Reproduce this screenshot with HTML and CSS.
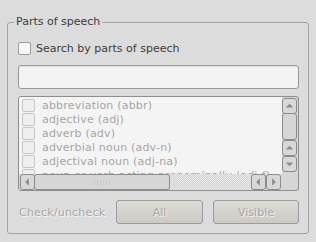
FILE: index.html
```html
<!DOCTYPE html>
<html lang="en">
<head>
  <meta charset="UTF-8">
  <title>Parts of speech</title>
  <link rel="stylesheet" href="styles.css">
</head>
<body>
  <fieldset class="group">
    <legend>Parts of speech</legend>

    <label class="check-row">
      <span class="box"></span>
      <span>Search by parts of speech</span>
    </label>

    <div class="entry"></div>

    <div class="list">
      <div class="list-main">
        <div class="items">
          <div class="item"><span class="box small"></span>abbreviation (abbr)</div>
          <div class="item"><span class="box small"></span>adjective (adj)</div>
          <div class="item"><span class="box small"></span>adverb (adv)</div>
          <div class="item"><span class="box small"></span>adverbial noun (adv-n)</div>
          <div class="item"><span class="box small"></span>adjectival noun (adj-na)</div>
          <div class="item"><span class="box small"></span>noun or verb acting prenominally (adj-f)</div>
        </div>
        <div class="hscroll">
          <span class="sbtn"><svg width="14" height="14" viewBox="0 0 14 14"><path d="M4.5 7 L8.5 3 L8.5 11 Z"/></svg></span>
          <span class="hthumb"><span class="grip"></span></span>
          <span class="trough"></span>
          <span class="sbtn"><svg width="14" height="14" viewBox="0 0 14 14"><path d="M4.5 7 L8.5 3 L8.5 11 Z"/></svg></span>
          <span class="sbtn"><svg width="14" height="14" viewBox="0 0 14 14"><path d="M9.5 7 L5.5 3 L5.5 11 Z"/></svg></span>
        </div>
      </div>
      <div class="vscroll">
        <span class="sbtn v"><svg width="14" height="14" viewBox="0 0 14 14"><path d="M7 4.5 L3 8.5 L11 8.5 Z"/></svg></span>
        <span class="vthumb"></span>
        <span class="sbtn v"><svg width="14" height="14" viewBox="0 0 14 14"><path d="M7 4.5 L3 8.5 L11 8.5 Z"/></svg></span>
        <span class="sbtn v"><svg width="14" height="14" viewBox="0 0 14 14"><path d="M7 9.5 L3 5.5 L11 5.5 Z"/></svg></span>
      </div>
    </div>

    <div class="actions">
      <span class="muted">Check/uncheck</span>
      <button class="button" disabled>All</button>
      <button class="button" disabled>Visible</button>
    </div>
  </fieldset>
</body>
</html>
```

FILE: styles.css
```css
body {
  margin: 0;
  padding: 15px 0 0;
  background-color: #dcdcdc;
  font-family: 'DejaVu Sans', sans-serif;
  font-size: 11px;
  color: #3c3c3c;
}

.group {
  margin: 0 7px;
  padding: 0 9px 9px 10px;
  border: 1px solid #a4a4a4;
  border-radius: 3px;
  min-width: 0;
}

.group legend {
  padding: 0 2px;
  margin-left: -4px;
  line-height: 14px;
}

.check-row {
  display: flex;
  align-items: center;
  gap: 5px;
  margin-top: 13px;
  height: 13px;
}

.box {
  display: inline-block;
  box-sizing: border-box;
  width: 13px;
  height: 13px;
  border: 1px solid #9c9c9c;
  border-radius: 2px;
  background-color: #f6f6f6;
}

.box.small {
  border-color: #c6c6c6;
  background-color: #efefef;
  margin-right: 7px;
  flex: none;
}

.entry {
  box-sizing: border-box;
  height: 24px;
  margin-top: 10px;
  border: 1px solid #9a9a9a;
  border-radius: 3px;
  background-color: #f3f3f3;
  box-shadow: inset 0 1px 1px rgba(0,0,0,0.08);
}

.list {
  display: flex;
  box-sizing: border-box;
  height: 95px;
  margin-top: 7px;
  border: 1px solid #8e8e8e;
  border-radius: 3px;
  background-color: #d6d6d6;
  overflow: hidden;
}

.list-main {
  flex: 1;
  display: flex;
  flex-direction: column;
  min-width: 0;
}

.items {
  flex: 1;
  background-color: #f4f4f4;
  overflow: hidden;
  padding: 1px 0 0 3px;
  color: #a6a6a6;
  letter-spacing: 0.2px;
}

.item {
  display: flex;
  align-items: center;
  height: 14px;
  white-space: nowrap;
}

.hscroll {
  display: flex;
  height: 16px;
  padding: 0 1px;
  background-color: #d6d6d6;
}

.sbtn {
  box-sizing: border-box;
  display: flex;
  align-items: center;
  justify-content: center;
  width: 15px;
  height: 16px;
  border: 1px solid #8c8c8c;
  border-radius: 3px;
  background-color: #d8d8d8;
  fill: #8c8c8c;
}

.hthumb {
  box-sizing: border-box;
  display: flex;
  align-items: center;
  justify-content: center;
  width: 136px;
  height: 16px;
  margin-left: -1px;
  border: 1px solid #8c8c8c;
  border-radius: 3px;
  background-color: #d6d6d6;
}

.grip {
  width: 18px;
  height: 5px;
  background-image: radial-gradient(#a4a4a4 0.6px, transparent 0.8px);
  background-size: 3px 2px;
}

.trough {
  flex: 1;
  background-color: #e6e6e6;
  background-image: repeating-conic-gradient(#cfcfcf 0 25%, #ececec 0 50%);
  background-size: 2px 2px;
}

.vscroll {
  display: flex;
  flex-direction: column;
  width: 15px;
  padding: 1px 1px 0 0;
}

.vthumb {
  box-sizing: border-box;
  height: 27px;
  border: 1px solid #8c8c8c;
  border-radius: 3px;
  background-color: #d6d6d6;
  margin-top: -1px;
}

.actions {
  display: flex;
  align-items: center;
  margin-top: 9px;
  height: 24px;
}

.muted {
  width: 97px;
  padding-left: 1px;
  color: #a8a8a8;
  text-shadow: 1px 1px 0 #f6f6f6;
  letter-spacing: 0.2px;
}

.button {
  box-sizing: border-box;
  width: 87px;
  height: 24px;
  margin-right: 10px;
  border: 1px solid #9e9c98;
  border-radius: 3px;
  background: linear-gradient(#dddbd8, #cdcac5);
  font-family: inherit;
  font-size: 11px;
  color: #a6a6a6;
  text-shadow: 1px 1px 0 #f4f4f4;
}

.button:last-child {
  margin-right: 0;
  flex: 1;
}
```
